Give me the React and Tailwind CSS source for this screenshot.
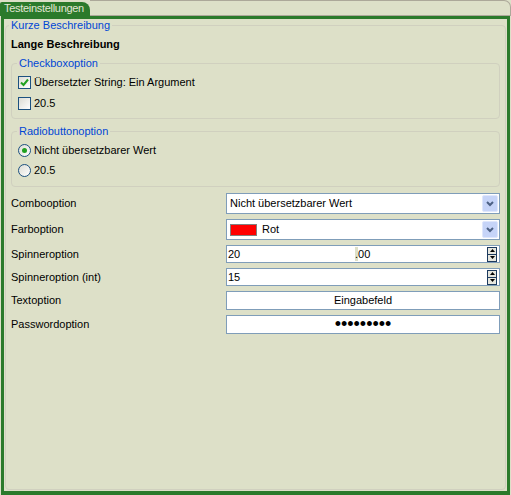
import React from "react";

const Legend = ({ children }) => (
  <legend className="px-[2px] -ml-[2px] text-[#0046d5]">{children}</legend>
);

const Checkbox = ({ checked, label }) => (
  <div className="flex items-center h-[13px]">
    <div className="w-[13px] h-[13px] border border-[#1c5180] bg-gradient-to-br from-[#dcdcd4] to-white flex items-center justify-center">
      {checked && (
        <svg width="9" height="9" viewBox="0 0 9 9">
          <path d="M1 4.5 L3.5 7 L8 1.5" stroke="#21a121" strokeWidth="2" fill="none" />
        </svg>
      )}
    </div>
    <span className="ml-[3px]">{label}</span>
  </div>
);

const Radio = ({ checked, label }) => (
  <div className="flex items-center h-[13px]">
    <div className="w-[13px] h-[13px] rounded-full border border-[#1c5180] bg-gradient-to-br from-[#dcdcd4] to-white flex items-center justify-center">
      {checked && <div className="w-[5px] h-[5px] rounded-full bg-[#21a121]" />}
    </div>
    <span className="ml-[3px]">{label}</span>
  </div>
);

const ComboButton = () => (
  <div className="w-[16px] h-[17px] bg-[#c6d4f8] border border-[#dfe7fc] rounded-[2px] flex items-center justify-center">
    <svg width="8" height="6" viewBox="0 0 8 6">
      <path d="M1 1 L4 4 L7 1" stroke="#4d6185" strokeWidth="2" fill="none" />
    </svg>
  </div>
);

const SpinButtons = () => (
  <div className="flex flex-col w-[10px] h-[15px] border border-[#1c3a5e] bg-[#e6e6de]">
    <div className="flex-1 flex items-center justify-center border-b border-[#1c3a5e]">
      <svg width="5" height="3" viewBox="0 0 5 3">
        <path d="M0 3 L2.5 0 L5 3 Z" fill="#000" />
      </svg>
    </div>
    <div className="flex-1 flex items-center justify-center">
      <svg width="5" height="3" viewBox="0 0 5 3">
        <path d="M0 0 L2.5 3 L5 0 Z" fill="#000" />
      </svg>
    </div>
  </div>
);

const Row = ({ label, children }) => (
  <div className="flex items-center">
    <div className="w-[215px]">{label}</div>
    <div className="flex-1">{children}</div>
  </div>
);

export default function App() {
  return (
    <div className="w-[511px] h-[495px] flex flex-col bg-[#dde0c8] text-black text-[11px] leading-[13px] font-['Liberation_Sans',Arial,sans-serif]">
      {/* tab strip */}
      <div className="flex h-[16px] shrink-0">
        <div className="mt-[2px] h-[14px] bg-[#2b7a2b] rounded-tr-[8px] rounded-tl-[2px] pl-[4px] pr-[6px] text-[#e3e7d5] whitespace-nowrap tracking-[-0.3px]">
          Testeinstellungen
        </div>
        <div className="flex-1 border-t border-r border-b border-[#aca899] rounded-tr-[7px]" />
      </div>

      {/* panel */}
      <div className="flex-1 flex pl-[1px] pr-[1px]">
        <div className="flex-1 flex flex-col border-l-[3px] border-r-[3px] border-t-[3px] border-b-[4px] border-[#2b7a2b]">
          <fieldset className="flex-1 mx-[1px] mb-[1px] border border-[#d0d0bf] rounded-[4px] px-[5px]">
            <Legend>Kurze Beschreibung</Legend>
            <div className="mt-[6px] font-bold">Lange Beschreibung</div>

            <fieldset className="mt-[6px] border border-[#d0d0bf] rounded-[4px] pl-[6px] pb-[8px]">
              <legend className="px-[2px] -ml-[1px] text-[#0046d5]">Checkboxoption</legend>
              <div className="mt-[6px] flex flex-col gap-[8px]">
                <Checkbox checked label="Übersetzter String: Ein Argument" />
                <Checkbox label="20.5" />
              </div>
            </fieldset>

            <fieldset className="mt-[6px] border border-[#d0d0bf] rounded-[4px] pl-[6px] pb-[9px]">
              <legend className="px-[2px] -ml-[1px] text-[#0046d5]">Radiobuttonoption</legend>
              <div className="mt-[6px] flex flex-col gap-[7px]">
                <Radio checked label="Nicht übersetzbarer Wert" />
                <Radio label="20.5" />
              </div>
            </fieldset>

            <div className="mt-[6px] flex flex-col gap-[5px]">
              <Row label="Combooption">
                <div className="h-[21px] bg-white border border-[#7f9db9] p-[1px] flex items-center">
                  <span className="flex-1 pl-[2px]">Nicht übersetzbarer Wert</span>
                  <ComboButton />
                </div>
              </Row>
              <Row label="Farboption">
                <div className="h-[21px] bg-white border border-[#7f9db9] p-[1px] flex items-center">
                  <div className="ml-[2px] w-[27px] h-[12px] bg-[#ff0000] border border-[#808080]" />
                  <span className="flex-1 pl-[5px]">Rot</span>
                  <ComboButton />
                </div>
              </Row>
              <Row label="Spinneroption">
                <div className="h-[18px] bg-white border border-[#7f9db9] flex items-center pr-[2px]">
                  <span className="w-[128px] pl-[1px]">20</span>
                  <span className="flex-1 flex items-center h-full">
                    <span className="bg-[#dde0c8] h-[14px] flex items-center">.</span>
                    <span>00</span>
                  </span>
                  <SpinButtons />
                </div>
              </Row>
              <Row label="Spinneroption (int)">
                <div className="h-[18px] bg-white border border-[#7f9db9] flex items-center pr-[2px]">
                  <span className="flex-1 pl-[1px]">15</span>
                  <SpinButtons />
                </div>
              </Row>
              <Row label="Textoption">
                <div className="h-[19px] bg-white border border-[#7f9db9] flex items-center justify-center">
                  Eingabefeld
                </div>
              </Row>
              <Row label="Passwordoption">
                <div className="h-[19px] bg-white border border-[#7f9db9] flex items-center justify-center text-[18px] leading-[17px]">
                  •••••••••
                </div>
              </Row>
            </div>
          </fieldset>
        </div>
      </div>
    </div>
  );
}
